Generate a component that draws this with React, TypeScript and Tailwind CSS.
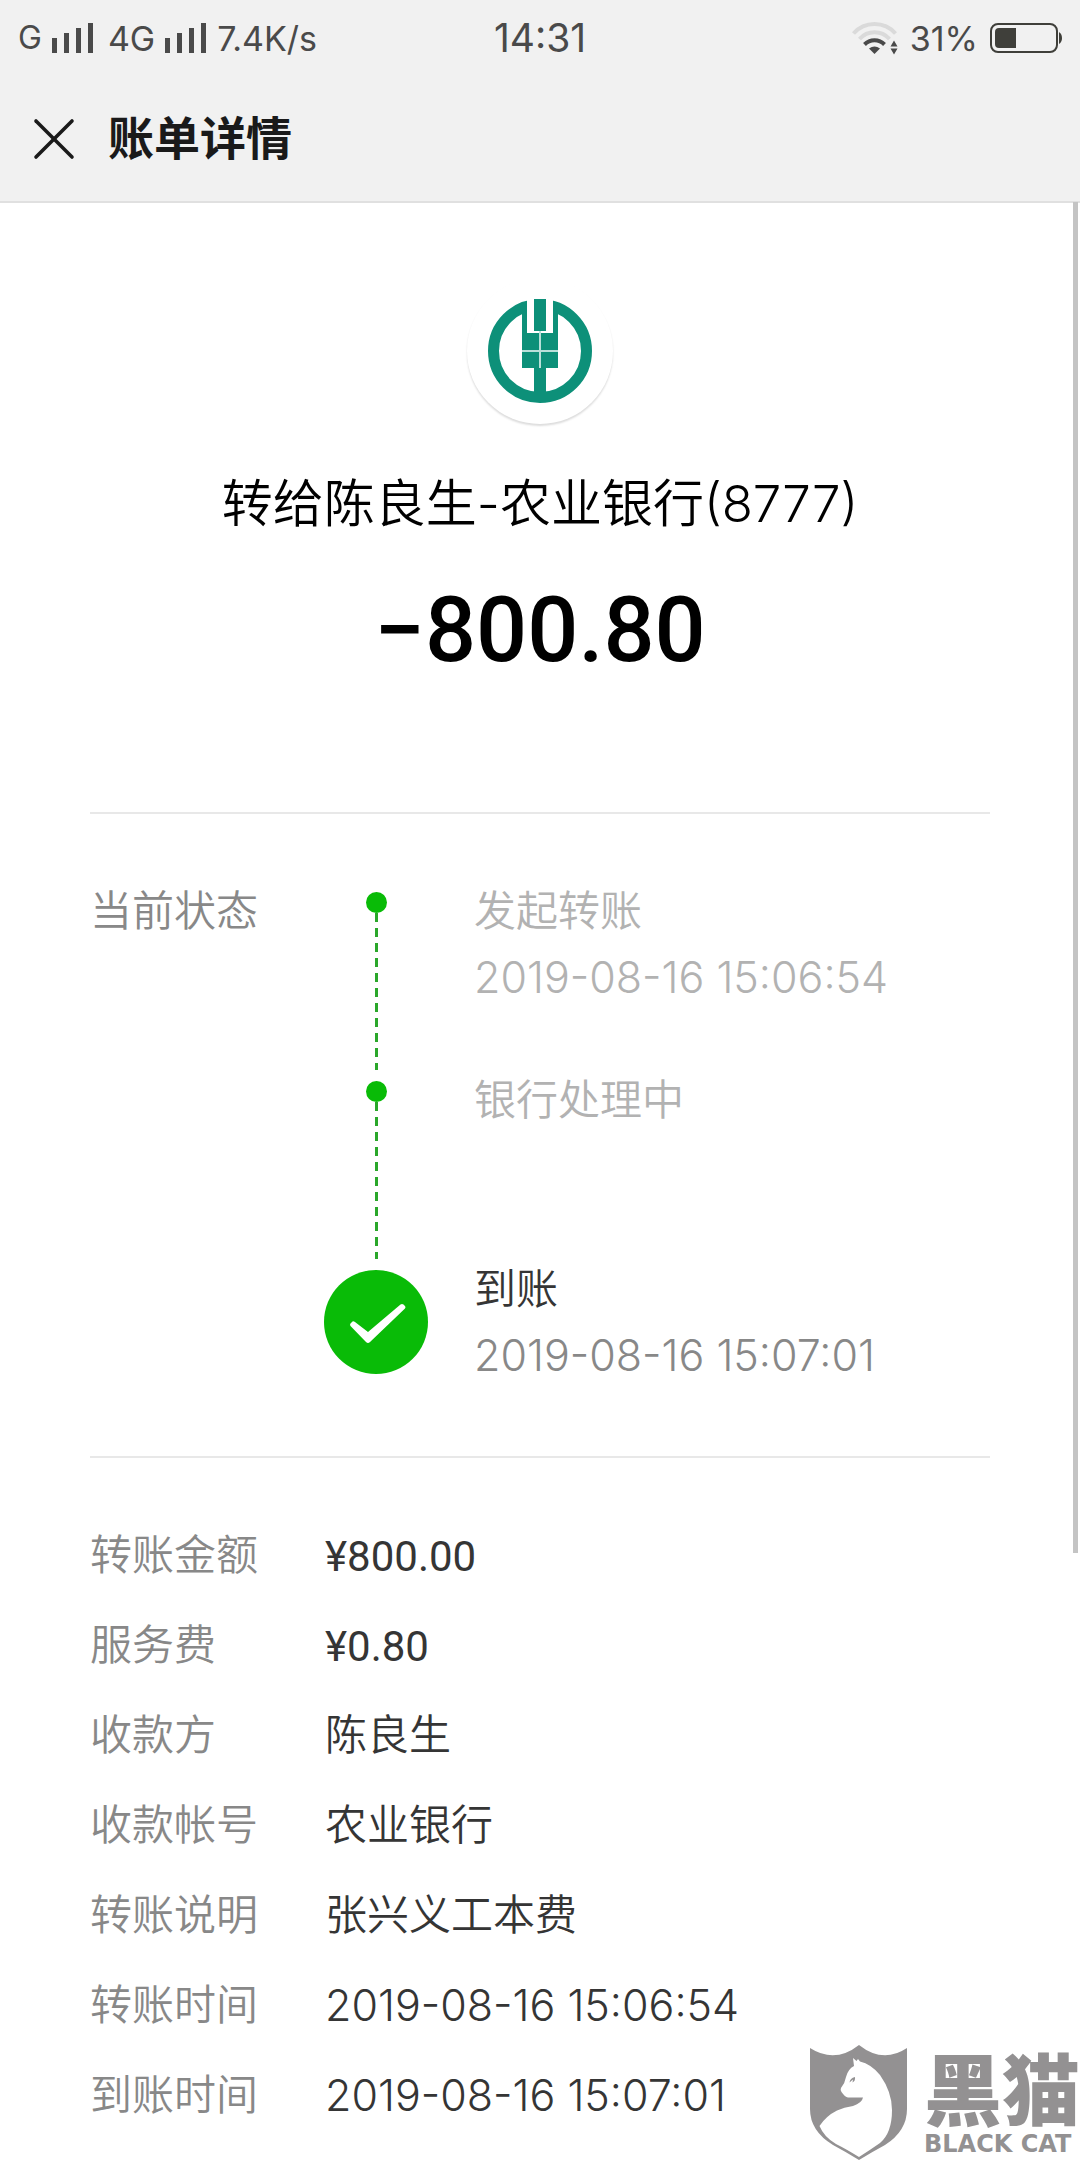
import { X } from 'lucide-react'

type Step = { title: string; time?: string; done?: boolean }

const STEPS: Step[] = [
  { title: '发起转账', time: '2019-08-16 15:06:54' },
  { title: '银行处理中' },
  { title: '到账', time: '2019-08-16 15:07:01', done: true },
]

const DETAILS: { label: string; value: string; kind?: 'money' | 'time' }[] = [
  { label: '转账金额', value: '¥800.00', kind: 'money' },
  { label: '服务费', value: '¥0.80', kind: 'money' },
  { label: '收款方', value: '陈良生' },
  { label: '收款帐号', value: '农业银行' },
  { label: '转账说明', value: '张兴义工本费' },
  { label: '转账时间', value: '2019-08-16 15:06:54', kind: 'time' },
  { label: '到账时间', value: '2019-08-16 15:07:01', kind: 'time' },
]

const VALUE_STYLES = {
  text: '',
  money: "pt-1 font-['Roboto',sans-serif] font-normal",
  time: 'text-[43px]',
}

function SignalBars() {
  return (
    <svg width="42" height="30" viewBox="0 0 42 30" fill="#4a4a4a" aria-hidden="true">
      <rect x="0" y="15" width="5" height="15" />
      <rect x="12" y="10" width="5" height="20" />
      <rect x="24" y="5" width="5" height="25" />
      <rect x="36" y="0" width="5" height="30" />
    </svg>
  )
}

function WifiIcon() {
  return (
    <svg width="46" height="34" viewBox="0 0 46 34" fill="none" aria-hidden="true">
      <path d="M1.500 12.500A28 28 0 0 1 43.500 12.500" stroke="#dadada" strokeWidth="4" />
      <path d="M7.500 18A20 20 0 0 1 37.500 18" stroke="#dadada" strokeWidth="4" />
      <path d="M12.500 23.500A14 14 0 0 1 32.500 23.500" stroke="#4a4a4a" strokeWidth="4" />
      <path d="M17 27.500Q22.500 23.500 28 27.500L22.500 33Z" fill="#4a4a4a" />
      <path d="M38.500 25.500h7L42 19.500Z M38.500 27.500h7L42 33.500Z" fill="#4a4a4a" />
    </svg>
  )
}

function BatteryIcon() {
  return (
    <svg width="72" height="30" viewBox="0 0 72 30" fill="none" aria-hidden="true">
      <rect x="1" y="1" width="66" height="28" rx="7" stroke="#3f3f3a" strokeWidth="2" />
      <path d="M9 5H26V25H9Q5 25 5 21V9Q5 5 9 5Z" fill="#3f3f3a" />
      <path d="M69 9Q72 11 72 15T69 21Z" fill="#3f3f3a" />
    </svg>
  )
}

function BankLogo() {
  return (
    <svg width="104" height="104" viewBox="0 0 104 104" aria-hidden="true">
      <circle cx="52" cy="52" r="46.500" fill="none" stroke="#0d9079" strokeWidth="11" />
      <path d="M39 0H65V20H39Z" fill="#fff" />
      <path d="M34 13L39 11V34H65V11L70 13V69H58V96H46V69H34Z" fill="#0d9079" />
      <path d="M46 0H58V32H46Z" fill="#0d9079" />
      <path d="M52 32V69M34 52H70" stroke="#b9e0d9" strokeWidth="2" />
    </svg>
  )
}

function CheckBadge() {
  return (
    <svg width="104" height="104" viewBox="0 0 104 104" aria-hidden="true">
      <circle cx="52" cy="52" r="52" fill="#09bb07" />
      <path d="M26.500 56Q25.500 54.500 26.500 53.500L28.500 51.500Q29.500 51 31 52L44 62L76.500 34.500Q78 33.500 79.500 34.500L81 36Q82 37 81 38.500L46 72Q44 74 42 72Z" fill="#fff" />
    </svg>
  )
}

function CatShield() {
  return (
    <svg width="98" height="115" viewBox="0 0 98 115" fill="#939192" aria-hidden="true">
      <path d="M0 3Q25 19 49 0Q73 19 97 3V64Q97 86 75 100Q62 107 49 115Q36 107 23 100Q0 86 0 64Z" />
      <path d="M43 13L46.500 16L48 14L50 16.500Q61 19 70 30Q82 47 82 65Q82 88 70 98Q60 105 49 112Q36 104 26 99Q14 92 9.500 81Q16 71 27 65.500Q34 62 43 61Q52 58 53 52.500H38Q35 52 31.500 47Q30 45 31 43Q35 38 36 32Q38 24 44 21Z" fill="#fff" />
      <path d="M39.500 37.500Q40 33 45 32Q45.500 36 42.500 37.500L43 34.500Z" />
    </svg>
  )
}

function StatusBar() {
  return (
    <div className="flex h-[76px] items-center px-[18px] text-[34px] text-[#4a4a4a]">
      <div className="flex flex-1 items-center gap-[10px]">
        <span className="text-[32px]">G</span>
        <SignalBars />
        <span className="ml-1 text-[34px]">4G</span>
        <SignalBars />
        <span>7.4K/s</span>
      </div>
      <span className="text-[39px]">14:31</span>
      <div className="flex flex-1 items-center justify-end gap-3">
        <WifiIcon />
        <span>31%</span>
        <BatteryIcon />
      </div>
    </div>
  )
}

function Timeline() {
  return (
    <section className="flex border-t-2 border-[#e8e8e8] pt-16 pb-[68px]">
      <h2 className="w-[234px] text-[#888888]">当前状态</h2>
      <ol className="flex-1">
        {STEPS.map((step) => (
          <li key={step.title} className={`flex gap-[46px] ${step.done ? '' : 'h-[189px]'}`}>
            <div className="flex w-[104px] flex-col items-center pt-[14px]">
              {step.done ? (
                <CheckBadge />
              ) : (
                <>
                  <span className="size-[21px] shrink-0 rounded-full bg-[#09bb07]" />
                  <span className="h-[157px] w-[3px] shrink-0 bg-[repeating-linear-gradient(to_bottom,#2aa72a_0,#2aa72a_9px,transparent_9px,transparent_15px)]" />
                </>
              )}
            </div>
            <div className={step.done ? 'text-[#888888]' : 'text-[#b2b2b2]'}>
              <p className={step.done ? 'text-[#353535]' : ''}>{step.title}</p>
              {step.time && <time className="block text-[43px]">{step.time}</time>}
            </div>
          </li>
        ))}
      </ol>
    </section>
  )
}

export default function App() {
  return (
    <div className="relative min-h-screen overflow-hidden bg-white font-['Inter','Noto_Sans_CJK_SC',sans-serif]">
      <header className="border-b-2 border-[#e0e0e0] bg-[#f1f1f1]">
        <StatusBar />
        <div className="flex h-[125px] items-center gap-[18px] px-[18px]">
          <button type="button" aria-label="关闭">
            <X className="size-[72px] text-[#1a1a1a]" strokeWidth={1.2} />
          </button>
          <h1 className="text-[46px] font-bold text-[#1a1a1a]">账单详情</h1>
        </div>
      </header>

      <main className="px-[90px] text-[42px] leading-[66px] font-[350]">
        <section className="flex flex-col items-center pt-[75px] pb-[126px] text-black">
          <div className="flex size-[146px] items-center justify-center rounded-full bg-white shadow-[0_2px_2px_#dddddd]">
            <BankLogo />
          </div>
          <p className="mt-11 text-[51px] leading-[72px]">转给陈良生-农业银行(8777)</p>
          <p className="mt-9 font-['Roboto',sans-serif] text-[90px] leading-[110px] font-medium">−800.80</p>
        </section>

        <Timeline />

        <dl className="border-t-2 border-[#e8e8e8] pt-[52px] pb-4">
          {DETAILS.map(({ label, value, kind = 'text' }) => (
            <div key={label} className="flex h-[90px] items-center">
              <dt className="w-[235px] text-[#888888]">{label}</dt>
              <dd className={`text-[#353535] ${VALUE_STYLES[kind]}`}>{value}</dd>
            </div>
          ))}
        </dl>
      </main>

      {/* Scroll indicator */}
      <div className="absolute top-[202px] right-[2px] h-[1351px] w-[5px] bg-[#c4c4c4]" />

      {/* Watermark */}
      <div className="absolute right-0 bottom-0 flex items-end gap-4 text-[#939192]">
        <CatShield />
        <div className="flex flex-col items-start pb-1">
          <span className="font-['Noto_Sans_CJK_SC',sans-serif] text-[78px] leading-[92px] font-black">黑猫</span>
          <span className="font-['DejaVu_Sans',sans-serif] text-[24px] leading-[24px] font-bold">BLACK CAT</span>
        </div>
      </div>
    </div>
  )
}
